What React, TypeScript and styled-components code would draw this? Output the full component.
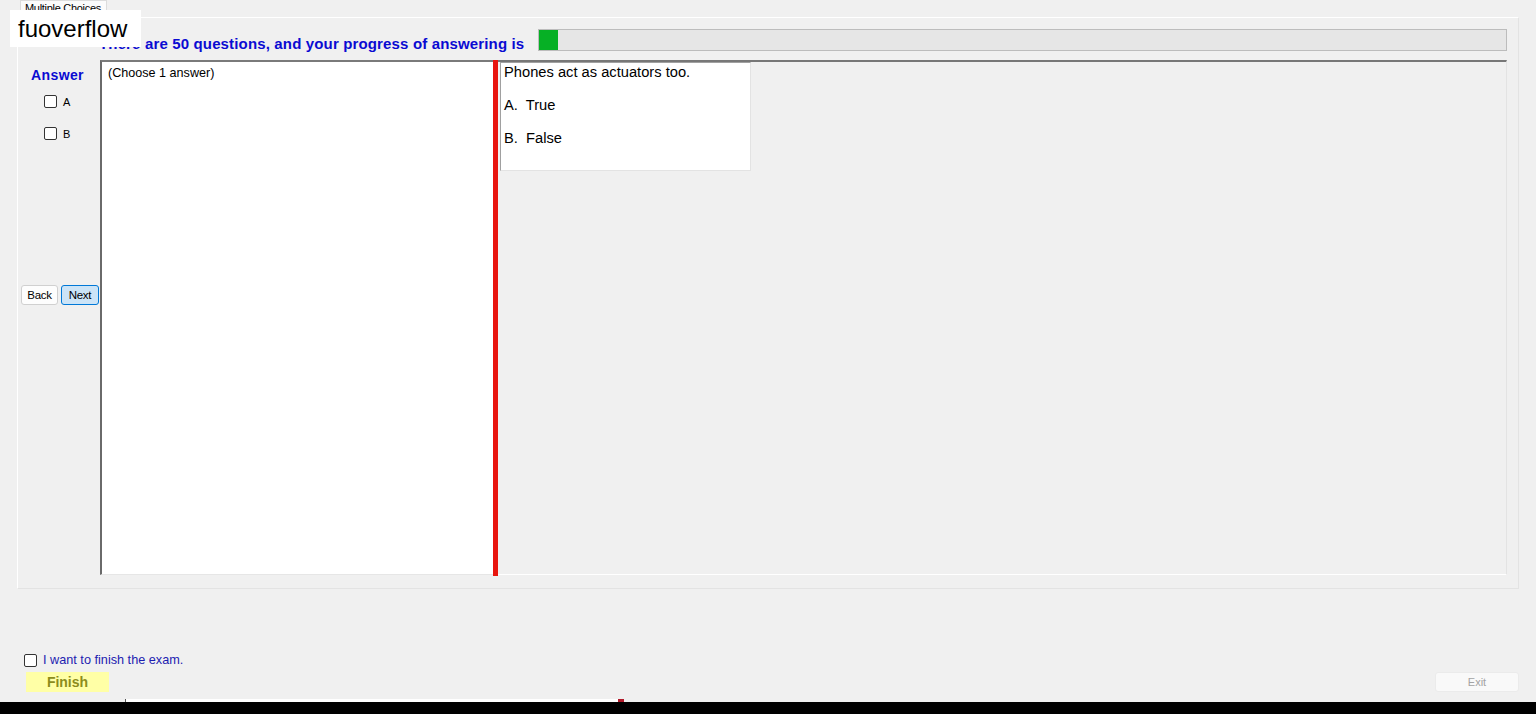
import React from "react";
import styled, { createGlobalStyle } from "styled-components";

const GlobalStyle = createGlobalStyle`
  html, body {
    margin: 0;
    padding: 0;
    background: #f0f0f0;
    font-family: "Liberation Sans", Arial, sans-serif;
  }
`;

const Page = styled.div`
  position: relative;
  display: flex;
  flex-direction: column;
  width: 1536px;
  height: 714px;
  overflow: hidden;
  background: #f0f0f0;
`;

const Watermark = styled.div`
  position: absolute;
  left: 10px;
  top: 10px;
  width: 131px;
  height: 37px;
  background: #ffffff;
  color: #000;
  font-size: 24px;
  line-height: 38px;
  padding-left: 8px;
  box-sizing: border-box;
  z-index: 5;
`;

const TabStrip = styled.div`
  display: flex;
  height: 17px;
  padding-left: 20px;
`;

const Tab = styled.div`
  height: 15px;
  padding: 0 5px 0 4px;
  background: #fbfbfb;
  border: 1px solid #dcdcdc;
  border-bottom: none;
  font-size: 11px;
  letter-spacing: -0.3px;
  line-height: 14px;
  color: #000;
`;

const TabPanel = styled.div`
  display: flex;
  flex-direction: column;
  height: 572px;
  margin: 0 17px 0 17px;
  box-sizing: border-box;
  border: 1px solid #ffffff;
  border-right-color: #e3e3e3;
  border-bottom-color: #e3e3e3;
  padding: 11px 11px 13px 0;
`;

const HeaderRow = styled.div`
  display: flex;
  align-items: flex-end;
  height: 22px;
`;

const Heading = styled.div`
  margin: 0 0 -2px 81px;
  width: 439px;
  color: #0a0ad2;
  font-weight: bold;
  font-size: 15px;
  letter-spacing: 0.15px;
  line-height: 18px;
  white-space: nowrap;
`;

const Progress = styled.div`
  flex: 1;
  height: 22px;
  box-sizing: border-box;
  border: 1px solid #bcbcbc;
  background: #e6e6e6;
  display: flex;
`;

const ProgressFill = styled.div`
  background: #06b025;
  height: 100%;
`;

const Body = styled.div`
  flex: 1;
  display: flex;
  margin-top: 9px;
`;

const Sidebar = styled.div`
  width: 82px;
  display: flex;
  flex-direction: column;
`;

const AnswerTitle = styled.div`
  margin: 8px 0 0 13px;
  color: #0a0ad2;
  font-weight: bold;
  font-size: 14px;
  letter-spacing: 0.4px;
  line-height: 14px;
`;

const ChoiceList = styled.div`
  display: flex;
  flex-direction: column;
  gap: 19px;
  margin: 13px 0 0 26px;
`;

const CheckRow = styled.label`
  display: flex;
  align-items: center;
  gap: 6px;
  font-size: 11px;
  color: #000;
  height: 13px;
`;

const CheckBox = styled.span`
  display: inline-block;
  width: 13px;
  height: 13px;
  box-sizing: border-box;
  border: 1px solid #333;
  border-radius: 2px;
  background: #fff;
`;

const NavRow = styled.div`
  display: flex;
  gap: 3px;
  margin: 145px 0 0 3px;
`;

const NavButton = styled.button<{ $focused?: boolean }>`
  height: 20px;
  width: ${({ $focused }) => ($focused ? "38px" : "37px")};
  padding: 0;
  font-family: "Liberation Sans", Arial, sans-serif;
  font-size: 11.5px;
  letter-spacing: -0.3px;
  color: #000;
  border-radius: 3px;
  border: 1px solid ${({ $focused }) => ($focused ? "#0078d7" : "#d0d0d0")};
  background: ${({ $focused }) => ($focused ? "#cce4f7" : "#fdfdfd")};
`;

const LeftPane = styled.div`
  width: 393px;
  box-sizing: border-box;
  background: #fff;
  border-top: 2px solid #7a7a7a;
  border-left: 2px solid #6a6a6a;
  border-bottom: 1px solid #e6e6e6;
  padding: 4px 6px;
  font-size: 12.6px;
  color: #000;
`;

const Splitter = styled.div`
  width: 5px;
  background: #e8150f;
  margin-bottom: -1px;
`;

const RightPane = styled.div`
  flex: 1;
  box-sizing: border-box;
  background: #f0f0f0;
  border-top: 2px solid #777;
  border-right: 1px solid #e3e3e3;
  border-bottom: 1px solid #fff;
  padding: 0 0 0 2px;
`;

const QuestionCard = styled.div`
  width: 251px;
  height: 109px;
  box-sizing: border-box;
  background: #fff;
  border-top: 1px solid #a0a0a0;
  border-left: 1px solid #a0a0a0;
  border-right: 1px solid #e3e3e3;
  border-bottom: 1px solid #e3e3e3;
  padding: 1px 3px;
  font-size: 14.7px;
  color: #000;
`;

const QLine = styled.div`
  line-height: 16px;
  height: 33px;
  white-space: pre;
`;

const Footer = styled.div`
  flex: 1;
  display: flex;
  flex-direction: column;
  justify-content: flex-end;
  padding: 0 17px 7px 24px;
`;

const FinishCheck = styled.label`
  display: flex;
  align-items: center;
  gap: 6px;
  height: 16px;
  color: #1d1db0;
  font-size: 12.7px;
`;

const ActionRow = styled.div`
  display: flex;
  justify-content: space-between;
  margin-top: 4px;
  height: 20px;
`;

const FinishButton = styled.button`
  width: 83px;
  height: 20px;
  margin-left: 2px;
  border: none;
  background: #ffffa6;
  color: #8c8c1c;
  font-family: "Liberation Sans", Arial, sans-serif;
  font-weight: bold;
  font-size: 14px;
  padding: 0;
`;

const ExitButton = styled.button`
  width: 84px;
  height: 20px;
  border: 1px solid #ebebeb;
  border-radius: 3px;
  background: #f9f9f9;
  color: #a3a3a3;
  font-family: "Liberation Sans", Arial, sans-serif;
  font-size: 11px;
  padding: 0;
`;

const StatusStrip = styled.div`
  height: 3px;
  display: flex;
  padding-left: 125px;
`;

const StripTrack = styled.div`
  width: 498px;
  background: #fff;
  border-left: 1px solid #555;
  display: flex;
  justify-content: flex-end;
`;

const StripMark = styled.div`
  width: 6px;
  background: #b11a2a;
`;

const BlackBar = styled.div`
  height: 12px;
  background: #000;
`;

const options = ["A.  True", "B.  False"];

export default function App() {
  const progress = 19;
  return (
    <>
      <GlobalStyle />
      <Page>
        <Watermark>fuoverflow</Watermark>
        <TabStrip>
          <Tab>Multiple Choices</Tab>
        </TabStrip>
        <TabPanel>
          <HeaderRow>
            <Heading>There are 50 questions, and your progress of answering is</Heading>
            <Progress>
              <ProgressFill style={{ width: progress }} />
            </Progress>
          </HeaderRow>
          <Body>
            <Sidebar>
              <AnswerTitle>Answer</AnswerTitle>
              <ChoiceList>
                <CheckRow>
                  <CheckBox />A
                </CheckRow>
                <CheckRow>
                  <CheckBox />B
                </CheckRow>
              </ChoiceList>
              <NavRow>
                <NavButton>Back</NavButton>
                <NavButton $focused>Next</NavButton>
              </NavRow>
            </Sidebar>
            <LeftPane>(Choose 1 answer)</LeftPane>
            <Splitter />
            <RightPane>
              <QuestionCard>
                <QLine>Phones act as actuators too.</QLine>
                {options.map((o) => (
                  <QLine key={o}>{o}</QLine>
                ))}
              </QuestionCard>
            </RightPane>
          </Body>
        </TabPanel>
        <Footer>
          <FinishCheck>
            <CheckBox />I want to finish the exam.
          </FinishCheck>
          <ActionRow>
            <FinishButton>Finish</FinishButton>
            <ExitButton disabled>Exit</ExitButton>
          </ActionRow>
        </Footer>
        <StatusStrip>
          <StripTrack>
            <StripMark />
          </StripTrack>
        </StatusStrip>
        <BlackBar />
      </Page>
    </>
  );
}
